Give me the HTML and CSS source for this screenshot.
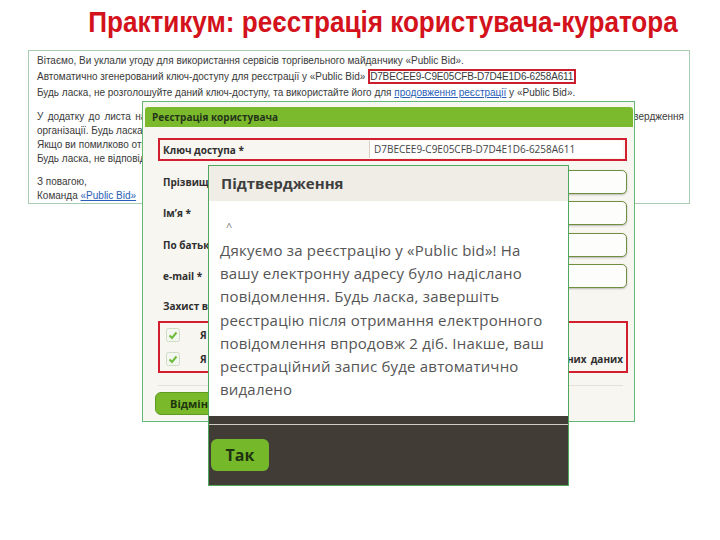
FILE: index.html
```html
<!DOCTYPE html>
<html lang="uk">

<head>
    <meta charset="UTF-8">
    <title>Практикум</title>
    <link rel="stylesheet" href="styles.css">
</head>

<body>
    <h1 class="title">Практикум: реєстрація користувача-куратора</h1>

    <div class="slide">
        <!-- лист з ключем доступу -->
        <div class="mail">
            <p class="mail-first">
                Вітаємо, Ви уклали угоду для використання сервісів торгівельного майданчику «Public Bid».<br>
                Автоматично згенерований ключ-доступу для реєстрації у «Public Bid» <span class="mail-key">D7BECEE9-C9E05CFB-D7D4E1D6-6258A611</span><br>
                Будь ласка, не розголошуйте даний ключ-доступу, та використайте його для <a href="#">продовження реєстрації</a> у «Public Bid».
            </p>
            <p class="mail-text">
                <span class="mail-wide">У додатку до листа надано шаблон довіреності на реєстрацію користувача, яку необхідно заповнити та надіслати для підтвердження</span>
                організації. Будь ласка, заповніть довіреність та завантажте її у свій кабінет.<br>
                Якщо ви помилково отримали цей лист, просто видаліть його.<br>
                Будь ласка, не відповідайте на цей лист.
            </p>
            <p class="mail-text">
                З повагою,<br>
                Команда <a href="#">«Public Bid»</a>
            </p>
        </div>

        <!-- форма реєстрації -->
        <div class="reg">
            <div class="reg-head">Реєстрація користувача</div>
            <div class="reg-body">
                <div class="row row-key">
                    <label>Ключ доступа *</label>
                    <div class="field field-key">D7BECEE9-C9E05CFB-D7D4E1D6-6258A611</div>
                </div>
                <div class="row">
                    <label>Прізвище *</label>
                    <div class="field"></div>
                </div>
                <div class="row">
                    <label>Ім’я *</label>
                    <div class="field"></div>
                </div>
                <div class="row">
                    <label>По батькові</label>
                    <div class="field"></div>
                </div>
                <div class="row">
                    <label>e-mail *</label>
                    <div class="field"></div>
                </div>
                <div class="reg-section">Захист вашої інформації</div>
                <div class="agree">
                    <div class="agree-row">
                        <svg class="check" width="14" height="14" viewBox="0 0 14 14"><rect x="0.5" y="0.5" width="13" height="13" rx="2" fill="#f3f7ef" stroke="#cfdcc6"/><path d="M3.5 7.5 L6 10 L10.5 4.5" fill="none" stroke="#6dbb3c" stroke-width="2"/></svg>
                        <span>Я погоджуюсь з правилами роботи торгівельного майданчику</span>
                    </div>
                    <div class="agree-row">
                        <svg class="check" width="14" height="14" viewBox="0 0 14 14"><rect x="0.5" y="0.5" width="13" height="13" rx="2" fill="#f3f7ef" stroke="#cfdcc6"/><path d="M3.5 7.5 L6 10 L10.5 4.5" fill="none" stroke="#6dbb3c" stroke-width="2"/></svg>
                        <span class="agree-wide">Я даю згоду на обробку моїх персональних та контактних телефонних даних</span>
                    </div>
                </div>
                <div class="reg-foot">
                    <button class="btn-cancel">Відмінити</button>
                </div>
            </div>
        </div>

        <!-- вікно підтвердження -->
        <div class="dialog">
            <div class="dialog-head">Підтвердження</div>
            <div class="dialog-body">
                <div class="caret">^</div>
                <p>Дякуємо за реєстрацію у «Public bid»! На вашу електронну адресу було надіслано повідомлення. Будь ласка, завершіть реєстрацію після отримання електронного повідомлення впродовж 2 діб. Інакше, ваш реєстраційний запис буде автоматично видалено</p>
            </div>
            <div class="dialog-foot">
                <button class="btn-ok">Так</button>
            </div>
        </div>
    </div>
</body>

</html>
```

FILE: styles.css
```css
* {
    margin: 0;
    padding: 0;
    box-sizing: border-box;
}

body {
    width: 720px;
    height: 540px;
    background: #fff;
    font-family: "Liberation Sans", Arial, sans-serif;
    overflow: hidden;
}

.title {
    padding: 7px 0 0 98px;
    height: 40px;
    font-family: "Liberation Sans Narrow", "Liberation Sans", sans-serif;
    font-size: 29px;
    line-height: 30px;
    font-weight: bold;
    color: #d3121c;
    white-space: nowrap;
    transform: scaleX(0.9);
    transform-origin: left center;
}

.slide {
    position: relative;
    height: 500px;
}

/* лист */
.mail {
    position: absolute;
    left: 28px;
    top: 10px;
    width: 662px;
    height: 154px;
    padding: 2px 5px 0 8px;
    border: 1px solid #a9cdb3;
    font-size: 10px;
    color: #3a3a3a;
    white-space: nowrap;
    overflow: hidden;
}

.mail-first {
    line-height: 16px;
}

.mail-text {
    margin-top: 9px;
    line-height: 14px;
}

.mail-wide {
    display: block;
    text-align-last: justify;
}

.mail-key {
    border: 2px solid #cc1f2e;
    padding: 0 1px 0 0;
    letter-spacing: -0.15px;
}

.mail a {
    color: #2860b8;
}

/* форма */
.reg {
    position: absolute;
    left: 142px;
    top: 61px;
    width: 493px;
    height: 321px;
    padding: 5px 1px 0 2px;
    border: 1px solid #62b874;
    background: #f8f6f1;
    font-family: "Open Sans", sans-serif;
    font-size: 10px;
    font-weight: bold;
    color: #2f2f2f;
}

.reg-head {
    height: 20px;
    line-height: 20px;
    padding-left: 7px;
    background: #7cba2d;
    border-radius: 3px 3px 0 0;
    color: #24341a;
}

.reg-body {
    padding: 11px 6px 0 13px;
}

.row {
    display: flex;
    align-items: center;
    height: 31.5px;
    padding-left: 5px;
}

.row label {
    width: 206px;
}

.row .field {
    flex: 1;
    height: 24px;
    border: 1px solid #6f8f40;
    border-radius: 5px;
    background: #fdfdfb;
    box-shadow: 0 1px 2px rgba(0, 0, 0, 0.25);
}

.row-key {
    height: 23px;
    margin-bottom: 5px;
    border: 2px solid #d11f30;
    padding-left: 3px;
}

.row-key .field-key {
    height: 17px;
    margin-right: 2px;
    border: none;
    border-left: 1px solid #d8cfc0;
    border-radius: 0;
    box-shadow: none;
    background: #fff;
    padding-left: 4px;
    line-height: 17px;
    font-weight: normal;
    color: #444;
}

.reg-section {
    height: 28px;
    line-height: 28px;
    padding-left: 5px;
}

.agree {
    height: 52px;
    margin-top: 1px;
    margin-right: -1px;
    border: 2px solid #d11f30;
    white-space: nowrap;
    overflow: hidden;
}

.agree-row {
    display: flex;
    align-items: center;
    height: 24px;
    padding-left: 6px;
}

.check {
    flex-shrink: 0;
}

.agree-row span {
    margin-left: 20px;
}

.agree-row .agree-wide {
    flex: 1;
    margin-right: 3px;
    text-align-last: justify;
}

.reg-foot {
    margin-top: 12px;
    margin-right: 4px;
    padding-top: 6px;
    border-top: 1px solid #e4e1d8;
}

.btn-cancel {
    height: 23px;
    margin-left: -3px;
    padding: 0 14px;
    border: 1px solid #5d9a22;
    border-radius: 6px;
    background: #79b92a;
    font-family: "Open Sans", sans-serif;
    font-size: 11px;
    font-weight: bold;
    color: #1f3510;
}

/* вікно */
.dialog {
    position: absolute;
    left: 208px;
    top: 125px;
    width: 361px;
    height: 321px;
    border: 1px solid #4ea85c;
    background: #fff;
    display: flex;
    flex-direction: column;
    font-family: "Open Sans", sans-serif;
}

.dialog-head {
    height: 35px;
    line-height: 34px;
    padding-left: 12px;
    background: #efede6;
    font-size: 15px;
    font-weight: bold;
    color: #3e3e3e;
}

.dialog-body {
    flex: 1;
    padding: 16px 14px 0 11px;
    color: #555;
    font-size: 15px;
    letter-spacing: 0.2px;
}

.caret {
    height: 22px;
    padding-left: 6px;
    font-size: 11px;
    line-height: 20px;
    color: #777;
}

.dialog-body p {
    line-height: 23.2px;
}

.dialog-foot {
    height: 69px;
    padding: 15px 0 0 2px;
    background: #413d36;
    border-top: 8px solid #413d36;
    box-shadow: inset 0 1px 0 #d2cdc2;
}

.btn-ok {
    width: 58px;
    height: 32px;
    border: none;
    border-radius: 6px;
    background: #75b82a;
    font-family: "Open Sans", sans-serif;
    font-size: 16px;
    font-weight: bold;
    color: #1d3310;
}
```
